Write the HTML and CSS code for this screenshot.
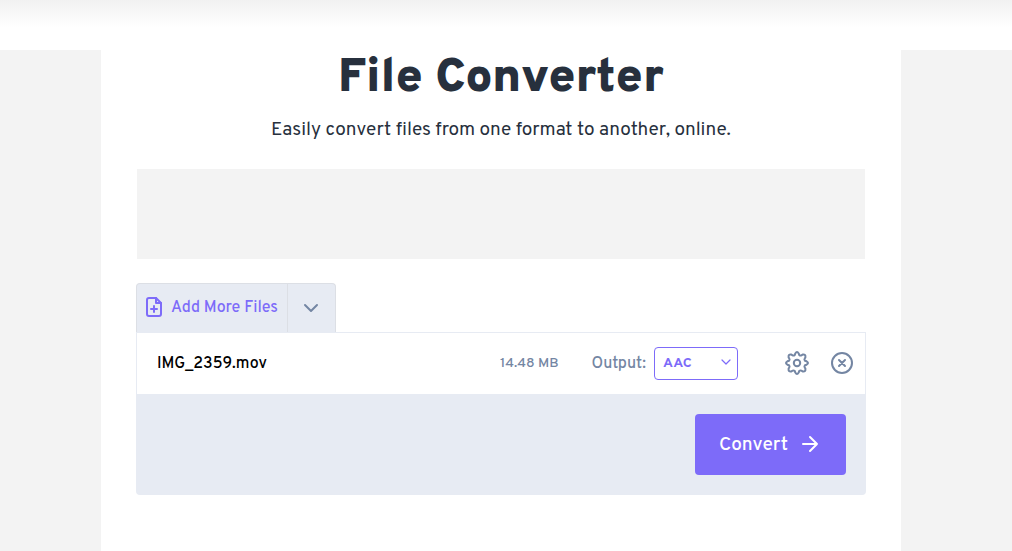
FILE: index.html
```html
<!DOCTYPE html>
<html lang="en">
<head>
    <meta charset="UTF-8">
    <meta name="viewport" content="width=device-width, initial-scale=1.0">
    <title>File Converter</title>
    <link rel="stylesheet" href="styles.css">
</head>
<body>
    <header class="top-bar"></header>
    <div class="layout">
        <aside class="side-ad"></aside>
        <main class="content">
            <h1>File Converter</h1>
            <p class="subtitle">Easily convert files from one format to another, online.</p>
            <div class="banner"></div>

            <form class="converter">
                <div class="add-files">
                    <button type="button" class="add-btn">
                        <svg width="18" height="22" viewBox="0 0 18 22" fill="none" stroke="currentColor" stroke-width="2" stroke-linejoin="round" stroke-linecap="round">
                            <path d="M11 1H4a2 2 0 0 0-2 2v14a2 2 0 0 0 2 2h10a2 2 0 0 0 2-2V6z"/>
                            <path d="M11 1v5h5M9 9v6M6 12h6"/>
                        </svg>
                        Add More Files
                    </button>
                    <button type="button" class="more-btn" aria-label="More sources">
                        <svg width="16" height="10" viewBox="0 0 16 10" fill="none" stroke="currentColor" stroke-width="2" stroke-linecap="round" stroke-linejoin="round">
                            <path d="M2 2l6 6 6-6"/>
                        </svg>
                    </button>
                </div>

                <div class="file-row">
                    <span class="file-name">IMG_2359.mov</span>
                    <span class="file-size">14.48 MB</span>
                    <label for="output">Output:</label>
                    <div class="select-box">
                        <select id="output">
                            <option>AAC</option>
                            <option>MP3</option>
                            <option>WAV</option>
                        </select>
                        <svg class="select-arrow" width="10" height="6" viewBox="0 0 10 6" fill="none" stroke="currentColor" stroke-width="1.2" stroke-linecap="round" stroke-linejoin="round">
                            <path d="M1 1l4 4 4-4"/>
                        </svg>
                    </div>
                    <button type="button" class="icon-btn settings" aria-label="Settings">
                        <svg width="26" height="26" viewBox="0 0 26 26" fill="none" stroke="currentColor" stroke-width="2" stroke-linejoin="round">
                            <path d="M11.3 3.4Q13 .6 14.7 3.4L15.2 5Q16.3 6 17.4 5.3L18.6 4.6Q21.9 4.1 21.4 7.4L20.7 8.6Q20 9.7 21 10.8L22.6 11.3Q25.4 13 22.6 14.7L21 15.2Q20 16.3 20.7 17.4L21.4 18.6Q21.9 21.9 18.6 21.4L17.4 20.7Q16.3 20 15.2 21L14.7 22.6Q13 25.4 11.3 22.6L10.8 21Q9.7 20 8.6 20.7L7.4 21.4Q4.1 21.9 4.6 18.6L5.3 17.4Q6 16.3 5 15.2L3.4 14.7Q.6 13 3.4 11.3L5 10.8Q6 9.7 5.3 8.6L4.6 7.4Q4.1 4.1 7.4 4.6L8.6 5.3Q9.7 6 10.8 5z"/>
                            <circle cx="13" cy="13" r="3.2"/>
                        </svg>
                    </button>
                    <button type="button" class="icon-btn" aria-label="Remove file">
                        <svg width="24" height="24" viewBox="0 0 24 24" fill="none" stroke="currentColor" stroke-width="2" stroke-linecap="round">
                            <circle cx="12" cy="12" r="10"/>
                            <path d="M9 9l6 6M15 9l-6 6"/>
                        </svg>
                    </button>
                </div>

                <div class="actions">
                    <button type="submit" class="convert-btn">
                        Convert
                        <svg width="18" height="20" viewBox="0 0 18 20" fill="none" stroke="currentColor" stroke-width="2" stroke-linecap="round" stroke-linejoin="round">
                            <path d="M2 9h14M9 2l7 7-7 7"/>
                        </svg>
                    </button>
                </div>
            </form>
        </main>
        <aside class="side-ad"></aside>
    </div>
</body>
</html>
```

FILE: styles.css
```css
:root{
    --main-color: #7d6bf9;
    --muted-color: #7486a3;
    --panel-color: #e7ebf3;
    --ad-color: #f3f3f3;
}
*{
    box-sizing: border-box;
}
body{
    margin: 0;
    min-height: 100vh;
    display: flex;
    flex-direction: column;
    background-color: #fff;
    color: #27303d;
    font-family: Overpass, Roboto, sans-serif;
}
button{
    border: 0;
    padding: 0;
    background: none;
    font-family: inherit;
    cursor: pointer;
}
svg{
    display: block;
    flex: none;
}
.top-bar{
    height: 50px;
    background: linear-gradient(#f1f1f1, #fff 28px);
}
.layout{
    flex: 1;
    display: grid;
    grid-template-columns: 10fr minmax(auto, 800px) 11fr;
}
.side-ad{
    background-color: var(--ad-color);
}
.content{
    padding: 0 35px 56px;
}
h1{
    margin: 0;
    font-size: 48px;
    font-weight: 900;
    line-height: 58px;
    text-align: center;
}
.subtitle{
    margin: 7px 0 24px;
    font-size: 19px;
    line-height: 30px;
    text-align: center;
}
.banner{
    height: 90px;
    margin: 0 1px 24px;
    background-color: var(--ad-color);
}
.add-files{
    display: flex;
    width: 200px;
    height: 49px;
    border: 1px solid #dcdfe5;
    border-bottom: 0;
    border-radius: 4px 4px 0 0;
    background-color: var(--panel-color);
}
.add-btn{
    flex: 1;
    display: flex;
    align-items: center;
    gap: 8px;
    padding-left: 8px;
    color: var(--main-color);
    font-size: 16px;
    font-weight: 500;
    white-space: nowrap;
}
.more-btn{
    display: flex;
    align-items: center;
    justify-content: center;
    width: 48px;
    border-left: 1px solid #dcdfe5;
    color: var(--muted-color);
}
.file-row{
    display: flex;
    align-items: center;
    height: 62px;
    padding: 0 11px 0 20px;
    border: 1px solid var(--panel-color);
    border-bottom: 0;
    color: var(--muted-color);
}
.file-name{
    flex: 1;
    color: #000;
    font-size: 16px;
    font-weight: 500;
}
.file-size{
    margin-right: 33px;
    font-size: 14px;
    font-weight: 500;
}
label{
    margin-right: 8px;
    font-size: 16px;
    font-weight: 500;
}
.select-box{
    position: relative;
    margin-right: 46px;
    color: var(--main-color);
}
select{
    appearance: none;
    display: block;
    width: 84px;
    height: 33px;
    padding: 0 24px 0 8px;
    border: 1px solid var(--main-color);
    border-radius: 4px;
    background-color: #fff;
    color: inherit;
    font-family: inherit;
    font-size: 14px;
    font-weight: 700;
}
.select-arrow{
    position: absolute;
    top: 12px;
    right: 7px;
    pointer-events: none;
}
.icon-btn{
    padding-bottom: 2px;
    color: var(--muted-color);
}
.settings{
    margin-right: 20px;
}
.actions{
    display: flex;
    justify-content: flex-end;
    padding: 20px;
    border-radius: 0 0 4px 4px;
    background-color: var(--panel-color);
}
.convert-btn{
    display: flex;
    align-items: center;
    gap: 13px;
    height: 61px;
    padding: 0 27px 0 24px;
    border-radius: 4px;
    background-color: var(--main-color);
    color: #fff;
    font-size: 19px;
    font-weight: 500;
}
```
